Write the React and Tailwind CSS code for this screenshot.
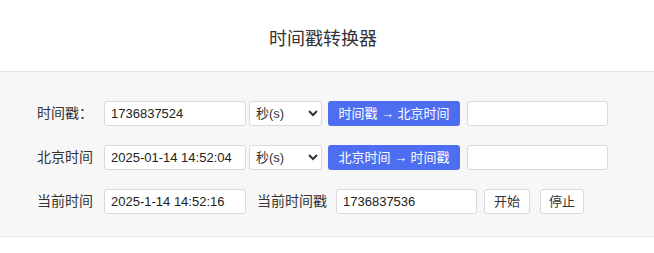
import React, { useState } from 'react';

const font = { fontFamily: '"Liberation Sans", "Noto Sans CJK SC", Arial, sans-serif' };

function TextBox({ value, width, onChange }) {
  return (
    <input
      type="text"
      value={value}
      onChange={(e) => onChange && onChange(e.target.value)}
      className={`h-[25px] ${width} rounded-[3px] border border-[#d9d9d9] bg-white px-[6px] text-[13px] text-[#222] outline-none`}
    />
  );
}

function UnitSelect() {
  return (
    <select
      defaultValue="s"
      className="ml-[3px] h-[25px] w-[73px] rounded-[3px] border border-[#d9d9d9] bg-white pl-[2px] text-[13px] text-[#333] outline-none"
    >
      <option value="s">秒(s)</option>
      <option value="ms">毫秒(ms)</option>
    </select>
  );
}

export default function App() {
  const [ts, setTs] = useState('1736837524');
  const [bj, setBj] = useState('2025-01-14 14:52:04');

  return (
    <div className="min-h-[253px] bg-white" style={font}>
      <header className="flex h-[72px] items-center justify-center border-b border-[#e5e5e5] bg-white pr-[8px] pt-[8px]">
        <h1 className="text-[18px] text-[#333]">时间戳转换器</h1>
      </header>

      <section className="flex flex-col gap-[19px] border-b border-[#e5e5e5] bg-[#f7f7f7] pb-[22px] pl-[37px] pt-[29px] text-[14px] text-[#333]">
        <div className="flex items-center">
          <span className="mr-[10px] w-[57px]">时间戳：</span>
          <TextBox value={ts} onChange={setTs} width="w-[142px]" />
          <UnitSelect />
          <button className="ml-[6px] h-[25px] w-[132px] rounded-[3px] bg-[#4e6ef2] text-[13px] text-white">
            时间戳 → 北京时间
          </button>
          <div className="ml-[7px]">
            <TextBox value="" width="w-[141px]" />
          </div>
        </div>

        <div className="flex items-center">
          <span className="mr-[10px] w-[57px]">北京时间</span>
          <TextBox value={bj} onChange={setBj} width="w-[142px]" />
          <UnitSelect />
          <button className="ml-[6px] h-[25px] w-[132px] rounded-[3px] bg-[#4e6ef2] text-[13px] text-white">
            北京时间 → 时间戳
          </button>
          <div className="ml-[7px]">
            <TextBox value="" width="w-[141px]" />
          </div>
        </div>

        <div className="flex items-center">
          <span className="mr-[10px] w-[57px]">当前时间</span>
          <TextBox value="2025-1-14 14:52:16" width="w-[142px]" />
          <span className="ml-[11px] mr-[9px]">当前时间戳</span>
          <TextBox value="1736837536" width="w-[141px]" />
          <button className="ml-[7px] h-[25px] w-[46px] rounded-[3px] border border-[#d9d9d9] bg-white text-[13px] text-[#333]">
            开始
          </button>
          <button className="ml-[10px] h-[25px] w-[44px] rounded-[3px] border border-[#d9d9d9] bg-white text-[13px] text-[#333]">
            停止
          </button>
        </div>
      </section>
    </div>
  );
}
